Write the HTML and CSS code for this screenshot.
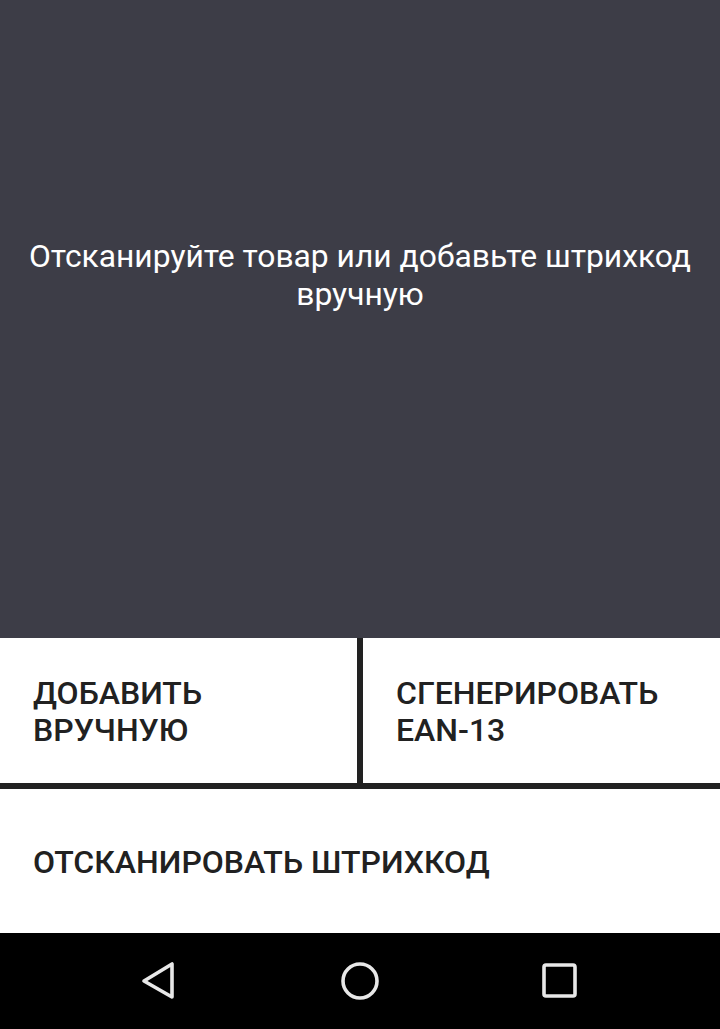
FILE: index.html
```html
<!DOCTYPE html>
<html lang="ru">
<head>
<meta charset="utf-8">
<title>Сканер</title>
<link rel="stylesheet" href="styles.css">
</head>
<body>
<div class="screen">
  <section class="scanner">
    <p class="hint">Отсканируйте товар или добавьте штрихкод вручную</p>
  </section>
  <div class="actions">
    <button class="btn">ДОБАВИТЬ<br>ВРУЧНУЮ</button>
    <div class="vdivider"></div>
    <button class="btn">СГЕНЕРИРОВАТЬ<br>EAN-13</button>
  </div>
  <div class="hdivider"></div>
  <button class="btn btn-wide">ОТСКАНИРОВАТЬ ШТРИХКОД</button>
  <nav class="navbar">
    <svg class="nav-icon" width="40" height="40" viewBox="0 0 40 40"><path d="M32 3 L32 36 L4 20 Z" fill="none" stroke="#e8e8e8" stroke-width="3.6" stroke-linejoin="round"/></svg>
    <svg class="nav-icon" width="40" height="40" viewBox="0 0 40 40"><circle cx="20" cy="20" r="17" fill="none" stroke="#e8e8e8" stroke-width="3.6"/></svg>
    <svg class="nav-icon" width="40" height="40" viewBox="0 0 40 40"><rect x="4" y="4" width="31" height="31" rx="2" fill="none" stroke="#e8e8e8" stroke-width="3.6"/></svg>
  </nav>
</div>
</body>
</html>
```

FILE: styles.css
```css
html, body {
  margin: 0;
  padding: 0;
  background: #ffffff;
}
.screen {
  width: 720px;
  height: 1029px;
  display: flex;
  flex-direction: column;
  font-family: Roboto, "Noto Sans", sans-serif;
  overflow: hidden;
}
.scanner {
  height: 638px;
  background: #3d3d47;
  display: flex;
  flex-direction: column;
  align-items: center;
  padding-top: 237px;
  box-sizing: border-box;
}
.hint {
  margin: 0;
  padding: 0 20px;
  color: #ffffff;
  font-size: 31.8px;
  line-height: 38px;
  text-align: center;
}
.actions {
  height: 145px;
  display: grid;
  grid-template-columns: 1fr 6px 1fr;
}
.vdivider {
  background: #212121;
}
.hdivider {
  height: 6px;
  background: #212121;
}
.btn {
  border: 0;
  margin: 0;
  background: #ffffff;
  color: #212121;
  font-family: Roboto, "Noto Sans", sans-serif;
  font-weight: 500;
  font-size: 32px;
  line-height: 37px;
  text-align: left;
  padding: 3px 0 0 33px;
  display: flex;
  align-items: center;
  box-sizing: border-box;
}
.btn-wide {
  height: 144px;
}
.navbar {
  flex: 1;
  background: #000000;
  display: flex;
  justify-content: space-between;
  align-items: center;
  padding: 0 140px;
}
.nav-icon {
  display: block;
}
```
